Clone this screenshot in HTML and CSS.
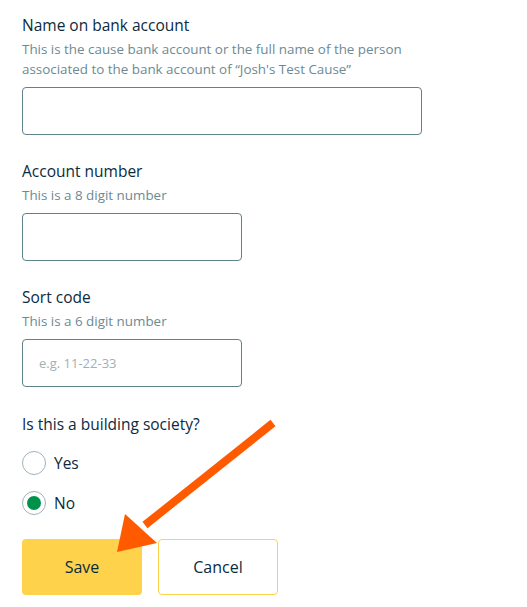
FILE: index.html
```html
<!DOCTYPE html>
<html lang="en">
<head>
<meta charset="UTF-8">
<title>Bank details</title>
<link rel="stylesheet" href="styles.css">
</head>
<body>

<!-- Bank details form -->
<form class="bank-form">
    <div class="field">
        <label class="field-label" for="name">Name on bank account</label>
        <p class="field-help">This is the cause bank account or the full name of the person associated to the bank account of “Josh's Test Cause”</p>
        <input class="text-input wide" id="name" type="text">
    </div>

    <div class="field">
        <label class="field-label" for="account">Account number</label>
        <p class="field-help">This is a 8 digit number</p>
        <input class="text-input" id="account" type="text">
    </div>

    <div class="field">
        <label class="field-label" for="sort">Sort code</label>
        <p class="field-help">This is a 6 digit number</p>
        <input class="text-input" id="sort" type="text" placeholder="e.g. 11-22-33">
    </div>

    <div class="field question">
        <p class="field-label">Is this a building society?</p>
        <label class="radio-row"><span class="radio"></span>Yes</label>
        <label class="radio-row"><span class="radio checked"></span>No</label>
    </div>

    <div class="actions">
        <button type="button" class="btn btn-save">Save</button>
        <button type="button" class="btn btn-cancel">Cancel</button>
    </div>

    <!-- annotation arrow -->
    <svg class="pointer" width="527" height="607" viewBox="0 0 527 607">
        <line x1="273" y1="423" x2="145" y2="525" stroke="#ff5a00" stroke-width="8"/>
        <polygon points="117,552 125,514 157,543" fill="#ff5a00"/>
    </svg>
</form>

</body>
</html>
```
FILE: styles.css
```css
/* Basic Reset */
body {
    margin: 0;
    padding: 0;
    font-family: "Open Sans", Lato, sans-serif;
    background-color: #ffffff;
    color: #0b2b3d;
}

/* Form */
.bank-form {
    position: relative;
    padding: 13px 22px 0;
}

.field {
    margin-bottom: 24px;
}

.field-label {
    display: block;
    margin: 0;
    font-size: 15.5px;
    line-height: 24px;
    color: #0b2b3d;
}

.field-help {
    margin: 2px 0 8px;
    font-size: 13.4px;
    line-height: 20px;
    color: #6c8a94;
    max-width: 400px;
}

/* Inputs */
.text-input {
    display: block;
    width: 220px;
    height: 48px;
    padding: 0 16px;
    border: 1px solid #5f828b;
    border-radius: 4px;
    box-sizing: border-box;
    font-family: inherit;
    font-size: 13px;
    color: #0b2b3d;
}

.text-input.wide {
    width: 400px;
}

.text-input::placeholder {
    color: #9fb0b7;
}

/* Radios */
.question {
    margin-top: 25px;
}

.question .field-label {
    margin-bottom: 15px;
}

.radio-row {
    display: flex;
    align-items: center;
    gap: 8px;
    height: 24px;
    margin-bottom: 16px;
    font-size: 15.5px;
    color: #0b2b3d;
}

.radio-row:last-child {
    margin-bottom: 0;
}

.radio {
    display: flex;
    align-items: center;
    justify-content: center;
    width: 24px;
    height: 24px;
    border: 1px solid #9fb2ba;
    border-radius: 50%;
    box-sizing: border-box;
}

.radio.checked::after {
    content: "";
    width: 14px;
    height: 14px;
    border-radius: 50%;
    background: #00924a;
}

/* Buttons */
.actions {
    display: flex;
    gap: 16px;
}

.btn {
    width: 120px;
    height: 56px;
    font-family: inherit;
    font-size: 16px;
    color: #0b2b3d;
    border-radius: 4px;
    cursor: pointer;
}

.btn-save {
    background: #ffd24c;
    border: none;
}

.btn-cancel {
    background: #ffffff;
    border: 1px solid #ffd24c;
}

/* Arrow overlay */
.pointer {
    position: absolute;
    top: 0;
    left: 0;
    pointer-events: none;
}
```
